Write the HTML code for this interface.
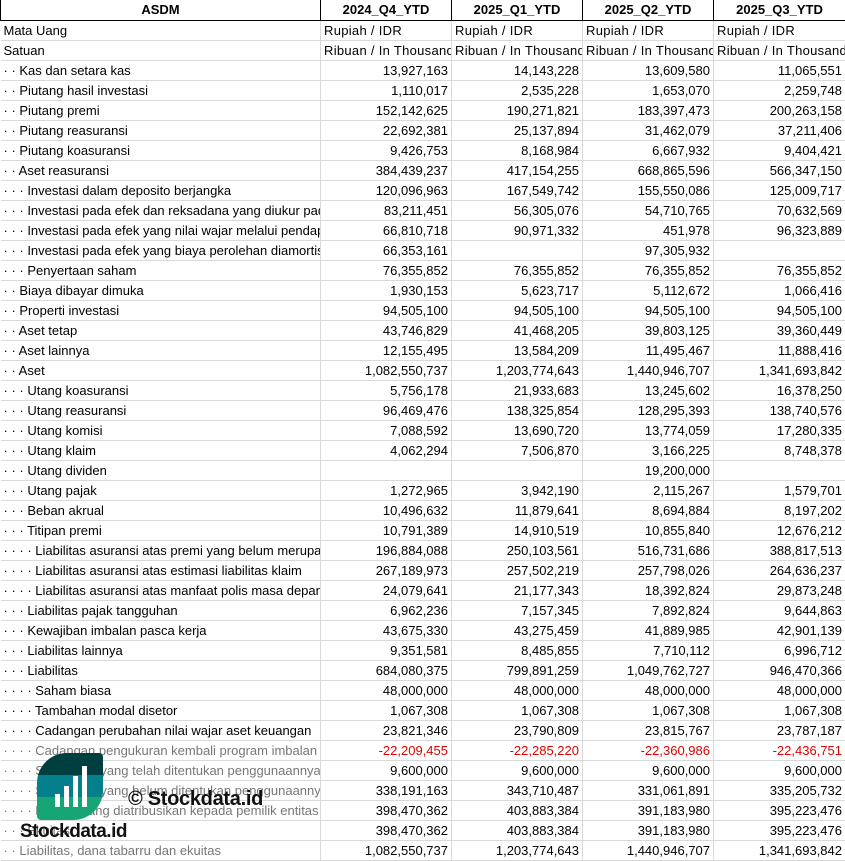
<!DOCTYPE html>
<html><head><meta charset="utf-8">
<style>
*{margin:0;padding:0;box-sizing:border-box}
body{width:845px;height:861px;background:#fff;overflow:hidden;position:relative;font-family:"Liberation Sans",sans-serif;font-size:13px;color:#000}
table{border-collapse:collapse;table-layout:fixed;width:845px}
td{height:20px;border-right:1px solid #d9d9d9;border-bottom:1px solid #d9d9d9;white-space:nowrap;overflow:hidden;padding:0 3px;text-align:right;line-height:19px}
td:first-child{text-align:left;padding-left:3px}
tr.h td{font-weight:bold;text-align:center;border:1px solid #000;border-top:none}
tr.u td{text-align:left;letter-spacing:0.3px}
tr.u td:first-child{letter-spacing:0}
td.g{color:#777}
tr.r td{color:#e00000}
tr.r td:first-child{color:#777}
.logo{position:absolute;left:37px;top:753px;width:66px;height:67px;border-radius:30px 4px 30px 4px;overflow:hidden}
</style></head><body>
<table>
<colgroup><col style="width:320px"><col style="width:131px"><col style="width:131px"><col style="width:131px"><col style="width:132px"></colgroup>
<tr class="h"><td style="text-align:center">ASDM</td><td>2024_Q4_YTD</td><td>2025_Q1_YTD</td><td>2025_Q2_YTD</td><td>2025_Q3_YTD</td></tr>
<tr class="u"><td>Mata Uang</td><td>Rupiah / IDR</td><td>Rupiah / IDR</td><td>Rupiah / IDR</td><td>Rupiah / IDR</td></tr>
<tr class="u"><td>Satuan</td><td>Ribuan / In Thousand</td><td>Ribuan / In Thousand</td><td>Ribuan / In Thousand</td><td>Ribuan / In Thousand</td></tr>
<tr><td>· · Kas dan setara kas</td><td>13,927,163</td><td>14,143,228</td><td>13,609,580</td><td>11,065,551</td></tr>
<tr><td>· · Piutang hasil investasi</td><td>1,110,017</td><td>2,535,228</td><td>1,653,070</td><td>2,259,748</td></tr>
<tr><td>· · Piutang premi</td><td>152,142,625</td><td>190,271,821</td><td>183,397,473</td><td>200,263,158</td></tr>
<tr><td>· · Piutang reasuransi</td><td>22,692,381</td><td>25,137,894</td><td>31,462,079</td><td>37,211,406</td></tr>
<tr><td>· · Piutang koasuransi</td><td>9,426,753</td><td>8,168,984</td><td>6,667,932</td><td>9,404,421</td></tr>
<tr><td>· · Aset reasuransi</td><td>384,439,237</td><td>417,154,255</td><td>668,865,596</td><td>566,347,150</td></tr>
<tr><td>· · · Investasi dalam deposito berjangka</td><td>120,096,963</td><td>167,549,742</td><td>155,550,086</td><td>125,009,717</td></tr>
<tr><td>· · · Investasi pada efek dan reksadana yang diukur pada</td><td>83,211,451</td><td>56,305,076</td><td>54,710,765</td><td>70,632,569</td></tr>
<tr><td>· · · Investasi pada efek yang nilai wajar melalui pendapatan</td><td>66,810,718</td><td>90,971,332</td><td>451,978</td><td>96,323,889</td></tr>
<tr><td>· · · Investasi pada efek yang biaya perolehan diamortisasi</td><td>66,353,161</td><td></td><td>97,305,932</td><td></td></tr>
<tr><td>· · · Penyertaan saham</td><td>76,355,852</td><td>76,355,852</td><td>76,355,852</td><td>76,355,852</td></tr>
<tr><td>· · Biaya dibayar dimuka</td><td>1,930,153</td><td>5,623,717</td><td>5,112,672</td><td>1,066,416</td></tr>
<tr><td>· · Properti investasi</td><td>94,505,100</td><td>94,505,100</td><td>94,505,100</td><td>94,505,100</td></tr>
<tr><td>· · Aset tetap</td><td>43,746,829</td><td>41,468,205</td><td>39,803,125</td><td>39,360,449</td></tr>
<tr><td>· · Aset lainnya</td><td>12,155,495</td><td>13,584,209</td><td>11,495,467</td><td>11,888,416</td></tr>
<tr><td>· · Aset</td><td>1,082,550,737</td><td>1,203,774,643</td><td>1,440,946,707</td><td>1,341,693,842</td></tr>
<tr><td>· · · Utang koasuransi</td><td>5,756,178</td><td>21,933,683</td><td>13,245,602</td><td>16,378,250</td></tr>
<tr><td>· · · Utang reasuransi</td><td>96,469,476</td><td>138,325,854</td><td>128,295,393</td><td>138,740,576</td></tr>
<tr><td>· · · Utang komisi</td><td>7,088,592</td><td>13,690,720</td><td>13,774,059</td><td>17,280,335</td></tr>
<tr><td>· · · Utang klaim</td><td>4,062,294</td><td>7,506,870</td><td>3,166,225</td><td>8,748,378</td></tr>
<tr><td>· · · Utang dividen</td><td></td><td></td><td>19,200,000</td><td></td></tr>
<tr><td>· · · Utang pajak</td><td>1,272,965</td><td>3,942,190</td><td>2,115,267</td><td>1,579,701</td></tr>
<tr><td>· · · Beban akrual</td><td>10,496,632</td><td>11,879,641</td><td>8,694,884</td><td>8,197,202</td></tr>
<tr><td>· · · Titipan premi</td><td>10,791,389</td><td>14,910,519</td><td>10,855,840</td><td>12,676,212</td></tr>
<tr><td>· · · · Liabilitas asuransi atas premi yang belum merupakan</td><td>196,884,088</td><td>250,103,561</td><td>516,731,686</td><td>388,817,513</td></tr>
<tr><td>· · · · Liabilitas asuransi atas estimasi liabilitas klaim</td><td>267,189,973</td><td>257,502,219</td><td>257,798,026</td><td>264,636,237</td></tr>
<tr><td>· · · · Liabilitas asuransi atas manfaat polis masa depan</td><td>24,079,641</td><td>21,177,343</td><td>18,392,824</td><td>29,873,248</td></tr>
<tr><td>· · · Liabilitas pajak tangguhan</td><td>6,962,236</td><td>7,157,345</td><td>7,892,824</td><td>9,644,863</td></tr>
<tr><td>· · · Kewajiban imbalan pasca kerja</td><td>43,675,330</td><td>43,275,459</td><td>41,889,985</td><td>42,901,139</td></tr>
<tr><td>· · · Liabilitas lainnya</td><td>9,351,581</td><td>8,485,855</td><td>7,710,112</td><td>6,996,712</td></tr>
<tr><td>· · · Liabilitas</td><td>684,080,375</td><td>799,891,259</td><td>1,049,762,727</td><td>946,470,366</td></tr>
<tr><td>· · · · Saham biasa</td><td>48,000,000</td><td>48,000,000</td><td>48,000,000</td><td>48,000,000</td></tr>
<tr><td>· · · · Tambahan modal disetor</td><td>1,067,308</td><td>1,067,308</td><td>1,067,308</td><td>1,067,308</td></tr>
<tr><td>· · · · Cadangan perubahan nilai wajar aset keuangan</td><td>23,821,346</td><td>23,790,809</td><td>23,815,767</td><td>23,787,187</td></tr>
<tr class="r"><td>· · · · Cadangan pengukuran kembali program imbalan</td><td>-22,209,455</td><td>-22,285,220</td><td>-22,360,986</td><td>-22,436,751</td></tr>
<tr><td class="g">· · · · Saldo laba yang telah ditentukan penggunaannya</td><td>9,600,000</td><td>9,600,000</td><td>9,600,000</td><td>9,600,000</td></tr>
<tr><td class="g">· · · · Saldo laba yang belum ditentukan penggunaannya</td><td>338,191,163</td><td>343,710,487</td><td>331,061,891</td><td>335,205,732</td></tr>
<tr><td class="g">· · · · Ekuitas yang diatribusikan kepada pemilik entitas</td><td>398,470,362</td><td>403,883,384</td><td>391,183,980</td><td>395,223,476</td></tr>
<tr><td class="g">· · · Ekuitas</td><td>398,470,362</td><td>403,883,384</td><td>391,183,980</td><td>395,223,476</td></tr>
<tr><td class="g">· · Liabilitas, dana tabarru dan ekuitas</td><td>1,082,550,737</td><td>1,203,774,643</td><td>1,440,946,707</td><td>1,341,693,842</td></tr>
</table>
<div class="logo">
<div style="position:absolute;left:0;top:0;width:66px;height:22px;background:#003f3f"></div>
<div style="position:absolute;left:0;top:22px;width:66px;height:22px;background:#047f8c"></div>
<div style="position:absolute;left:0;top:44px;width:66px;height:23px;background:#16a574"></div>
<div style="position:absolute;left:18px;top:41px;width:5px;height:13px;background:#fff"></div>
<div style="position:absolute;left:27px;top:33px;width:5px;height:21px;background:#fff"></div>
<div style="position:absolute;left:36px;top:23px;width:5px;height:31px;background:#fff"></div>
<div style="position:absolute;left:45px;top:13px;width:5px;height:41px;background:#fff"></div>
</div>
<div style="position:absolute;left:128px;top:788px;font-size:20px;font-weight:bold;color:#111;letter-spacing:-0.3px">© Stockdata.id</div>
<div style="position:absolute;left:20px;top:821px;font-size:19px;font-weight:bold;color:#111;letter-spacing:-0.5px">Stockdata.id</div>
</body></html>
